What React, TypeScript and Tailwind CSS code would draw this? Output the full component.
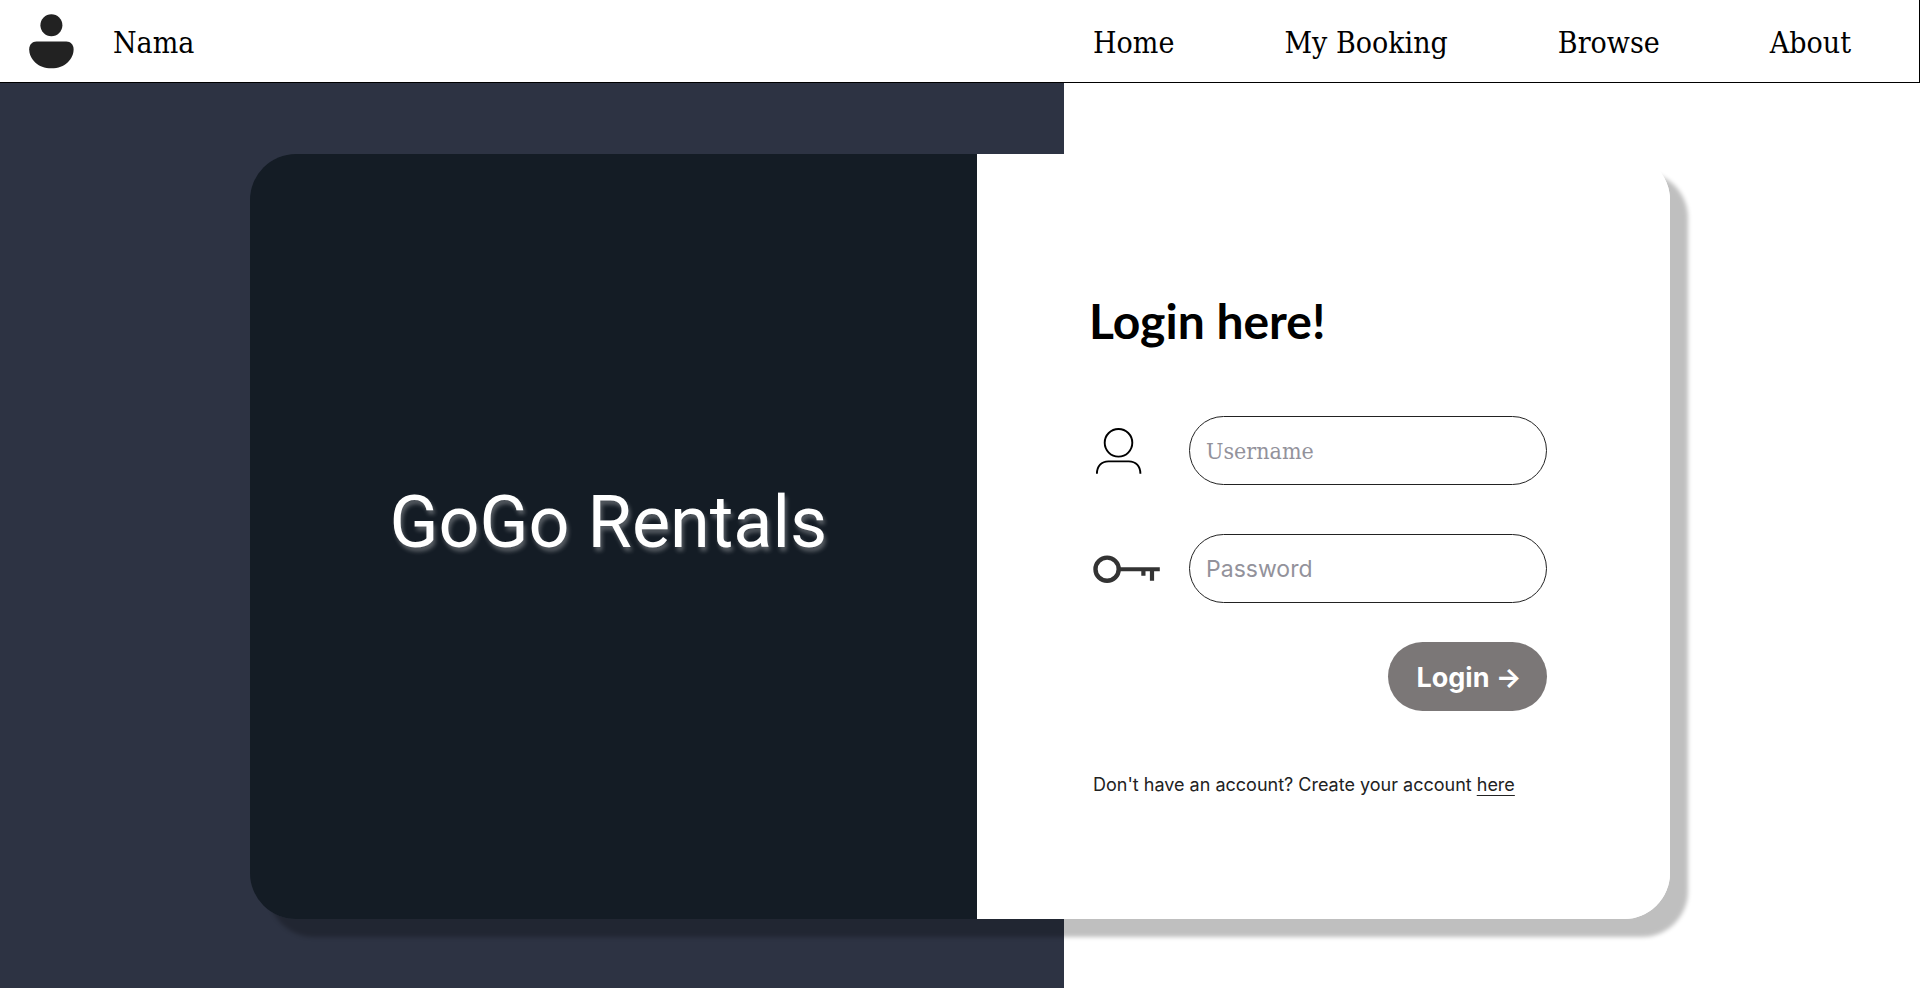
import React from "react";

const navItems = ["Home", "My Booking", "Browse", "About"];

function AvatarIcon() {
  return (
    <svg viewBox="0 0 48 56" className="h-14 w-12" fill="#222222" aria-hidden="true">
      <circle cx="24.4" cy="11.3" r="11" />
      <path d="M9.5 27.5H39.3C43.6 27.5 46.6 30.8 46.6 35.2C46.6 45 38 54.3 24.4 54.3C10.8 54.3 2.2 45 2.2 35.2C2.2 30.8 5.2 27.5 9.5 27.5Z" />
    </svg>
  );
}

function UserIcon() {
  return (
    <svg viewBox="0 0 72 72" className="size-18" fill="none" stroke="#000000" strokeWidth="1.9" aria-hidden="true">
      <circle cx="29.5" cy="27.8" r="13.8" />
      <path d="M7.9 58.8C7.9 51 12.5 46.4 19.5 46.4H39.8C46.8 46.4 51.4 51 51.4 58.8" />
    </svg>
  );
}

function KeyIcon() {
  return (
    <svg viewBox="0 0 72 72" className="size-18" fill="none" stroke="#333333" aria-hidden="true">
      <circle cx="18.1" cy="36.2" r="11.6" strokeWidth="4.4" />
      <path d="M30 36.2H70.8" strokeWidth="4" />
      <path d="M54.4 37V42.8M63 37V47.8" strokeWidth="4.2" />
    </svg>
  );
}

export default function App() {
  return (
    <div className="flex min-h-screen flex-col bg-white font-['Inter',sans-serif] text-black">
      <header className="flex h-[83px] items-center justify-between border-r border-b border-black pt-0.5 pr-[68px] pl-[27px] font-['DejaVu_Serif_Condensed','DejaVu_Serif',serif] text-[30px]">
        <div className="flex items-center gap-[38px]">
          <AvatarIcon />
          <span>Nama</span>
        </div>
        <nav className="flex gap-[110px]">
          {navItems.map((item) => (
            <a key={item} href="#" className="whitespace-nowrap">
              {item}
            </a>
          ))}
        </nav>
      </header>

      <main className="mb-px flex flex-1 bg-[linear-gradient(to_right,#2d3343_55.4%,#ffffff_55.4%)] px-[13%] pt-[71px] pb-[69px]">
        <div className="flex flex-1 rounded-[46px] shadow-[18px_18px_4px_rgba(0,0,0,0.25)]">
          <section className="flex w-[51.2%] items-center justify-center rounded-l-[46px] bg-[#141c25] pr-2.5 pb-7">
            <h1 className="whitespace-nowrap font-['Roboto',sans-serif] text-[72px] leading-none text-white [text-shadow:2px_4px_4px_rgba(255,255,255,0.3)]">
              GoGo Rentals
            </h1>
          </section>

          <section className="flex-1 rounded-r-[46px] bg-white px-28 pt-[139px]">
            <form className="w-full max-w-[458px]" onSubmit={(event) => event.preventDefault()}>
              <h2 className="font-['Lato',sans-serif] text-[48px] leading-[56px] font-bold whitespace-nowrap">
                Login here!
              </h2>

              <div className="mt-[67px] flex items-center">
                <label htmlFor="username" aria-label="Username" className="-my-1 w-[100px] shrink-0">
                  <UserIcon />
                </label>
                <input
                  id="username"
                  type="text"
                  placeholder="Username"
                  className="h-[69px] w-full min-w-0 rounded-full border border-[#222222] px-4 font-['DejaVu_Serif_Condensed','DejaVu_Serif',serif] text-[23px] outline-none placeholder:text-[#93929b]"
                />
              </div>

              <div className="mt-[49px] flex items-center">
                <label htmlFor="password" aria-label="Password" className="-my-1 w-[100px] shrink-0">
                  <KeyIcon />
                </label>
                <input
                  id="password"
                  type="password"
                  placeholder="Password"
                  className="h-[69px] w-full min-w-0 rounded-full border border-[#222222] px-4 text-[23px] outline-none placeholder:text-[#93929b]"
                />
              </div>

              <div className="mt-[39px] flex justify-end">
                <button
                  type="submit"
                  className="h-[69px] w-[159px] rounded-full bg-[#7b7777] pt-[3px] pl-[3px] text-[27px] font-bold text-white"
                >
                  Login →
                </button>
              </div>

              <p className="mt-[60px] pl-1 text-[18px] leading-7 whitespace-nowrap text-[#222222]">
                Don't have an account? Create your account{" "}
                <a href="#" className="underline decoration-1 underline-offset-4">
                  here
                </a>
              </p>
            </form>
          </section>
        </div>
      </main>
    </div>
  );
}
